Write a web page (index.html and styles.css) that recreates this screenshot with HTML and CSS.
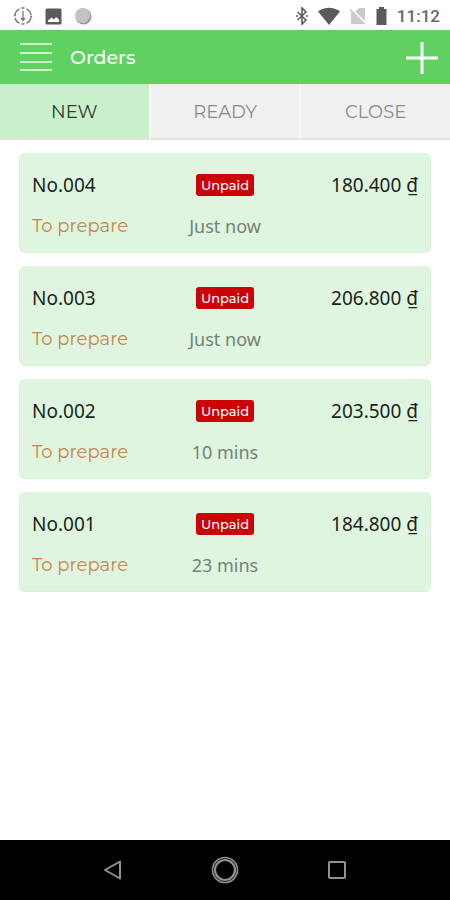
FILE: index.html
```html
<!DOCTYPE html>
<html lang="en">
<head>
<meta charset="utf-8">
<meta name="viewport" content="width=device-width, initial-scale=1">
<title>Orders</title>
<link rel="stylesheet" href="styles.css">
</head>
<body>
<div class="statusbar">
  <div class="status-left">
    <svg width="20" height="20" viewBox="0 0 20 20" fill="none" stroke="#757575" stroke-width="1.3"><path d="M6.5 2.8A8 8 0 0 0 2 9M2 12a8 8 0 0 0 4.500 5.200M8.500 18h3M13.500 17.200A8 8 0 0 0 18 12M18 9a8 8 0 0 0-4.500-6.200M8.500 2h3M10 5v9M8 12l2 2.500 2-2.500"/><path d="M.5 8.500h3L2 11zM16.500 11.500h3L18 9z" fill="#757575" stroke="none"/></svg>
    <svg width="17" height="17" viewBox="0 0 17 17"><path fill="#5b5b5d" fill-rule="evenodd" d="M2 .5h13A1.500 1.500 0 0 1 16.500 2v13a1.500 1.500 0 0 1-1.500 1.500H2A1.500 1.500 0 0 1 .5 15V2A1.500 1.500 0 0 1 2 .5zM3 14h11v-2.500L11 9 9 11.500 6.500 9.500 3 12.500z"/></svg>
    <svg width="18" height="18" viewBox="0 0 18 18"><circle cx="9.500" cy="9.500" r="8" fill="#999"/><circle cx="8.500" cy="8.500" r="7.500" fill="#c4c4c4"/></svg>
  </div>
  <div class="status-right">
    <svg width="12" height="18" viewBox="0 0 12 18" fill="none" stroke="#5b5b5d" stroke-width="1.600"><path d="M1.500 5l8.500 8-4 4V1l4 4-8.500 8"/><path d="M0 9h2M10 9h2"/></svg>
    <svg width="22" height="18" viewBox="0 0 22 18"><path fill="#5b5b5d" d="M0 4.500C6.500-.5 15.500-.5 22 4.500L11 18z"/></svg>
    <svg width="16" height="18" viewBox="0 0 16 18"><path fill="#c9c9c9" d="M15 1v13L5.500 4.500L9 1zM1 4.500L13.500 17H1z"/><path d="M0 1.500l15.500 15.500" stroke="#fff" stroke-width="1.500"/><path d="M0 2.500L14.500 17" stroke="#bdbdbd" stroke-width="1.200"/></svg>
    <svg width="11" height="18" viewBox="0 0 11 18"><path fill="#5b5b5d" d="M3 0h5v2h2.500v16H.5V2H3z"/></svg>
    <time class="clock">11:12</time>
  </div>
</div>
<header class="appbar">
  <button class="icon-button" type="button" aria-label="Menu"><svg width="32" height="30" viewBox="0 0 32 30" stroke="#cdf5cd" stroke-width="2"><path d="M0 1h32M0 10h32M0 19h32M0 27h32"/></svg></button>
  <h1 class="title">Orders</h1>
  <button class="icon-button" type="button" aria-label="New order"><svg width="32" height="32" viewBox="0 0 32 32" stroke="#fff" stroke-width="3"><path d="M0 16h32M16 0v32"/></svg></button>
</header>
<nav class="tabs">
  <button class="tab tab-active" type="button">NEW</button>
  <button class="tab" type="button">READY</button>
  <button class="tab" type="button">CLOSE</button>
</nav>
<main class="orders">
  <article class="order"><h2 class="number">No.004</h2><span class="badge">Unpaid</span><span class="price">180.400 ₫</span><span class="state">To prepare</span><span class="age">Just now</span></article>
  <article class="order"><h2 class="number">No.003</h2><span class="badge">Unpaid</span><span class="price">206.800 ₫</span><span class="state">To prepare</span><span class="age">Just now</span></article>
  <article class="order"><h2 class="number">No.002</h2><span class="badge">Unpaid</span><span class="price">203.500 ₫</span><span class="state">To prepare</span><span class="age">10 mins</span></article>
  <article class="order"><h2 class="number">No.001</h2><span class="badge">Unpaid</span><span class="price">184.800 ₫</span><span class="state">To prepare</span><span class="age">23 mins</span></article>
</main>
<footer class="navbar">
  <button class="icon-button" type="button" aria-label="Back"><svg width="28" height="28" viewBox="0 0 28 28" fill="none" stroke="#929292" stroke-width="2"><path d="M21 5.500v17L6 14z" stroke-linejoin="round"/></svg></button>
  <button class="icon-button" type="button" aria-label="Home"><svg width="28" height="28" viewBox="0 0 28 28" fill="none" stroke="#929292"><circle cx="14" cy="14" r="12.500" stroke-width="1.600"/><circle cx="14" cy="14" r="10" stroke-width="2.200"/></svg></button>
  <button class="icon-button" type="button" aria-label="Recent apps"><svg width="28" height="28" viewBox="0 0 28 28" fill="none" stroke="#929292" stroke-width="2"><rect x="6" y="6" width="16" height="16" rx="1"/></svg></button>
</footer>
</body>
</html>
```
FILE: styles.css
```css
* {
  box-sizing: border-box;
}

body {
  margin: 0;
  min-height: 100vh;
  display: flex;
  flex-direction: column;
  background: #fff;
  font-family: "Montserrat", Inter, "Open Sans", sans-serif;
}

svg {
  display: block;
}

button {
  margin: 0;
  padding: 0;
  border: 0;
  background: none;
  font: inherit;
}

.statusbar {
  height: 30px;
  padding: 2px 10px 0 13px;
  display: flex;
  align-items: center;
  justify-content: space-between;
}

.status-left,
.status-right {
  display: flex;
  align-items: center;
  gap: 12px;
}

.status-right {
  gap: 10px;
}

.clock {
  font: 500 17px/20px Roboto, sans-serif;
  color: #66666a;
}

.appbar {
  height: 54px;
  padding: 2px 12px 0 20px;
  display: flex;
  align-items: center;
  background: #5fd160;
}

.title {
  flex: 1;
  margin: 0 0 0 18px;
  font-size: 19px;
  line-height: 24px;
  font-weight: 500;
  color: #fff;
}

.tabs {
  display: grid;
  grid-template-columns: repeat(3, 1fr);
  gap: 2px;
  border-bottom: 2px solid #e3e3e3;
  background: #f8f8f8;
}

.tab {
  height: 54px;
  padding-top: 2px;
  font-size: 18px;
  font-weight: 400;
  background: #f0f0f0;
  color: #8a8a8a;
}

.tab-active {
  background: #caf0cb;
  color: #2c3b2c;
}

.orders {
  flex: 1;
  padding: 13px 19px;
  display: flex;
  flex-direction: column;
  gap: 13px;
}

.order {
  padding: 18px 12px 12px;
  display: grid;
  grid-template-columns: 1fr 1fr 1fr;
  grid-template-rows: 28px 28px;
  row-gap: 13px;
  align-items: center;
  border: 1px solid #d8f1d9;
  border-width: 0 1px 1px;
  border-radius: 6px;
  background: #dff5e0;
}

.number,
.price {
  margin: 0;
  font: 400 19px/28px "Noto Sans", sans-serif;
  color: #1a241b;
}

.price {
  text-align: right;
}

.badge {
  justify-self: center;
  padding: 0 5px;
  border-radius: 3px;
  background: #cb0206;
  color: #fff;
  font-size: 13px;
  line-height: 22px;
  font-weight: 500;
}

.state {
  font-size: 18px;
  color: #c6864b;
}

.age {
  text-align: center;
  font: 400 18px/28px "Noto Sans", sans-serif;
  color: #728474;
}

.navbar {
  height: 60px;
  padding: 0 99px;
  display: flex;
  align-items: center;
  justify-content: space-between;
  background: #000;
}
```
